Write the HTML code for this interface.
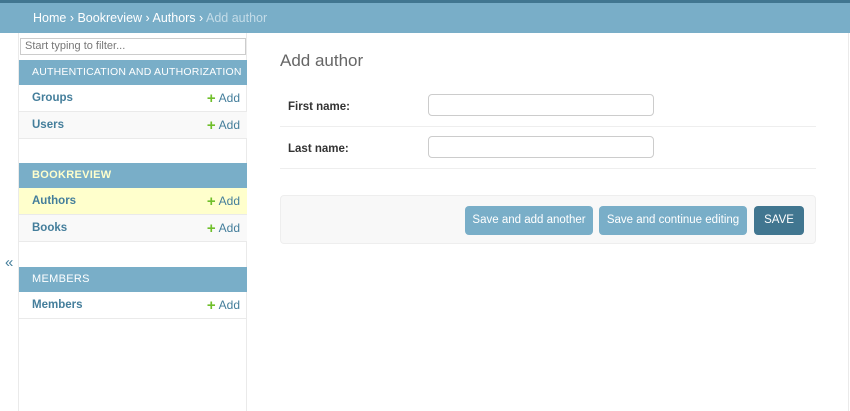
<!DOCTYPE html>
<html><head><style>
*{box-sizing:border-box;margin:0;padding:0}
body{width:850px;height:411px;overflow:hidden;background:#fff;font-family:"Liberation Sans",sans-serif;font-size:11.5px;position:relative}
.top{position:absolute;left:0;top:0;width:850px;height:3px;background:#417690}
.bc{position:absolute;left:0;top:3px;width:850px;height:30px;background:#79aec8;color:#fff;font-size:12.5px;line-height:30px;padding-left:33px}
.bc span{color:#c4dce8}
.side{position:absolute;left:18px;top:33px;width:229px;height:378px;border-left:1px solid #eaeaea;border-right:1px solid #eaeaea}
.filter{position:absolute;left:1px;top:5px;width:226px;height:17px;border:1px solid #ccc;color:#777;font-size:11px;line-height:15px;padding-left:4px}
.hd{position:absolute;left:0;width:228px;height:25px;background:#79aec8;color:#fff;font-size:11px;line-height:25px;padding-left:13px;letter-spacing:.3px;white-space:nowrap;overflow:hidden}
.row{position:absolute;left:0;width:228px;height:27px;border-bottom:1px solid #eaeaea;line-height:27px;padding-left:13px;font-weight:bold;color:#447e9b}
.row i{position:absolute;right:7px;top:0;font-style:normal;font-weight:normal;color:#447e9b;font-size:12px;line-height:27px}
.row i b{color:#70bf2b;font-size:15px;margin-right:3px;vertical-align:-1px}
.arr{position:absolute;left:5px;top:254px;color:#447e9b;font-size:15px}
.rb{position:absolute;right:1px;top:33px;width:1px;height:378px;background:#eaeaea}
h1{position:absolute;left:280px;top:51px;font-weight:normal;font-size:17px;color:#666}
.fr{position:absolute;left:280px;width:536px;height:42px;border-bottom:1px solid #eee}
.fr label{position:absolute;left:8px;top:16px;font-weight:bold;color:#333}
.fr div{position:absolute;left:148px;top:9px;width:226px;height:22px;border:1px solid #ccc;border-radius:4px}
.sub{position:absolute;left:280px;top:195px;width:536px;height:49px;background:#f8f8f8;border:1px solid #eee;border-radius:4px}
.btn{position:absolute;top:10px;height:29px;border-radius:4px;background:#79aec8;color:#fff;font-size:11.5px;line-height:29px;text-align:center;white-space:nowrap}
</style></head><body>
<div class="top"></div>
<div class="bc">Home › Bookreview › Authors › <span>Add author</span></div>
<div class="side">
<div class="filter">Start typing to filter...</div>
<div class="hd" style="top:27px;font-size:10.5px;letter-spacing:.2px">AUTHENTICATION AND AUTHORIZATION</div>
<div class="row" style="top:52px">Groups<i><b>+</b>Add</i></div>
<div class="row" style="top:79px;background:#f9f9f9">Users<i><b>+</b>Add</i></div>
<div class="hd" style="top:130px;color:#ffffcc;font-weight:bold">BOOKREVIEW</div>
<div class="row" style="top:155px;background:#ffffcc">Authors<i><b>+</b>Add</i></div>
<div class="row" style="top:182px;background:#f9f9f9">Books<i><b>+</b>Add</i></div>
<div class="hd" style="top:234px">MEMBERS</div>
<div class="row" style="top:259px">Members<i><b>+</b>Add</i></div>
</div>
<div class="arr">«</div>
<div class="rb"></div>
<h1>Add author</h1>
<div class="fr" style="top:85px"><label>First name:</label><div></div></div>
<div class="fr" style="top:127px"><label>Last name:</label><div></div></div>
<div class="sub">
<div class="btn" style="left:184px;width:128px">Save and add another</div>
<div class="btn" style="left:318px;width:148px">Save and continue editing</div>
<div class="btn" style="left:473px;width:50px;background:#417690">SAVE</div>
</div>
</body></html>
